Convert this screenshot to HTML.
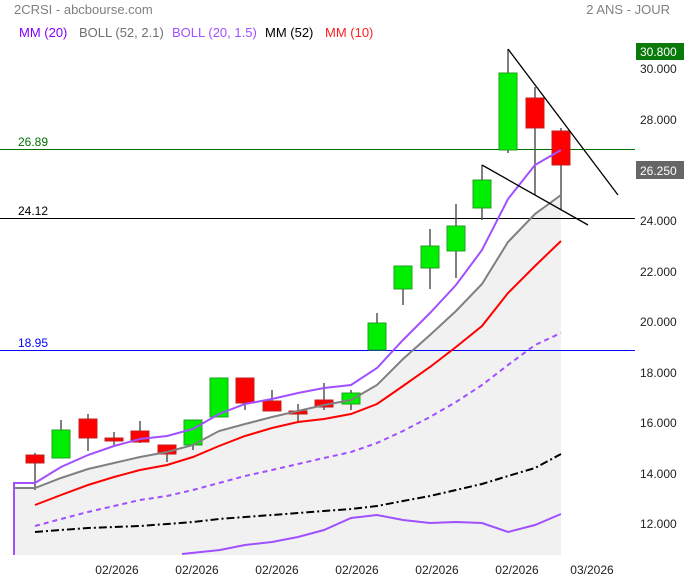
<!DOCTYPE html>
<html><head><meta charset="utf-8"><style>
body{margin:0;background:#fff;width:684px;height:580px;overflow:hidden;font-family:"Liberation Sans",sans-serif}
</style></head><body>
<svg width="684" height="580" xmlns="http://www.w3.org/2000/svg" font-family="Liberation Sans, sans-serif">
<text x="14" y="14" font-size="13" fill="#808080">2CRSI - abcbourse.com</text>
<text x="670" y="14" font-size="13" fill="#808080" text-anchor="end">2 ANS - JOUR</text>
<g font-size="13">
<text x="19" y="37" fill="#8000ff">MM (20)</text>
<text x="79" y="37" fill="#707070">BOLL (52, 2.1)</text>
<text x="172" y="37" fill="#a050ff">BOLL (20, 1.5)</text>
<text x="265" y="37" fill="#000">MM (52)</text>
<text x="325" y="37" fill="#ff2020">MM (10)</text>
</g>
<!-- fill -->
<polygon fill="#f1f1f1" points="14,488 35,488 61,478 88,469 114,463 140,457 167,452 193,445 219,431 245,424 272,417 298,411 324,405 351,400 377,385 403,359 430,335 456,311 482,284 508,242 535,214 561,195 561,555 14,555"/>
<!-- hlines -->
<line x1="0" y1="149.5" x2="635" y2="149.5" stroke="#007000"/>
<line x1="0" y1="218.5" x2="635" y2="218.5" stroke="#000"/>
<line x1="0" y1="350.5" x2="635" y2="350.5" stroke="#0000ff"/>
<text x="18" y="146" font-size="12" fill="#007000">26.89</text>
<text x="18" y="215" font-size="12" fill="#000">24.12</text>
<text x="18" y="347" font-size="12" fill="#0000ff">18.95</text>
<!-- candles -->
<g stroke="#555" stroke-width="1.5">
<line x1="35" y1="453" x2="35" y2="490"/><line x1="61" y1="420" x2="61" y2="458"/><line x1="88" y1="414" x2="88" y2="451"/><line x1="114" y1="432" x2="114" y2="445"/><line x1="140" y1="421" x2="140" y2="443"/><line x1="167" y1="445" x2="167" y2="462"/><line x1="193" y1="420" x2="193" y2="450"/><line x1="219" y1="378" x2="219" y2="417"/><line x1="245" y1="378" x2="245" y2="410"/><line x1="272" y1="390" x2="272" y2="411"/><line x1="298" y1="404" x2="298" y2="422"/><line x1="324" y1="383" x2="324" y2="410"/><line x1="351" y1="390" x2="351" y2="410"/><line x1="377" y1="313" x2="377" y2="350"/><line x1="403" y1="266" x2="403" y2="305"/><line x1="430" y1="229" x2="430" y2="289"/><line x1="456" y1="204" x2="456" y2="278"/><line x1="482" y1="165" x2="482" y2="220"/><line x1="508" y1="49" x2="508" y2="153"/><line x1="535" y1="87" x2="535" y2="195"/><line x1="561" y1="128" x2="561" y2="210"/>
</g>
<g stroke-width="1">
<g fill="#ff0000" stroke="#c02020">
<rect x="26" y="455" width="18" height="8"/><rect x="79" y="419" width="18" height="19"/><rect x="105" y="438" width="18" height="3"/><rect x="131" y="431" width="18" height="11"/><rect x="158" y="445" width="18" height="9"/><rect x="236" y="378" width="18" height="25"/><rect x="263" y="401" width="18" height="10"/><rect x="289" y="411" width="18" height="3"/><rect x="315" y="400" width="18" height="7"/><rect x="526" y="98" width="18" height="30"/><rect x="552" y="131" width="18" height="34"/>
</g>
<g fill="#00ee00" stroke="#20a020">
<rect x="52" y="430" width="18" height="28"/><rect x="184" y="420" width="18" height="25"/><rect x="210" y="378" width="18" height="39"/><rect x="342" y="393" width="18" height="11"/><rect x="368" y="323" width="18" height="27"/><rect x="394" y="266" width="18" height="23"/><rect x="421" y="246" width="18" height="22"/><rect x="447" y="226" width="18" height="25"/><rect x="473" y="180" width="18" height="28"/><rect x="499" y="73" width="18" height="77"/>
</g></g>
<g fill="none" stroke-width="2">
<polyline stroke="#000" stroke-dasharray="8,3,2,3" points="35,532 61,530 88,528 114,527 140,526 167,524 193,522 219,519 245,517 272,515 298,513 324,511 351,509 377,506 403,501 430,496 456,490 482,484 508,476 535,468 561,454"/>
<polyline stroke="#a050ff" stroke-dasharray="5,4" points="35,526 61,519 88,512 114,506 140,500 167,496 193,490 219,483 245,476 272,470 298,464 324,458 351,452 377,443 403,431 430,417 456,402 482,385 508,365 535,345 561,333"/>
<polyline stroke="#a050ff" points="182,554 220,550 245,545 272,542 298,537 324,530 351,518 377,515 403,520 430,523 456,522 482,523 508,532 535,525 561,514"/>
<polyline stroke="#ff0000" points="35,505 61,495 88,485 114,477 140,470 167,465 193,457 219,446 245,436 272,428 298,422 324,419 351,414 377,404 403,386 430,367 456,347 482,326 508,293 535,266 561,241"/>
<polyline stroke="#808080" points="14,488 35,488 61,478 88,469 114,463 140,457 167,452 193,445 219,431 245,424 272,417 298,411 324,405 351,400 377,385 403,359 430,335 456,311 482,284 508,242 535,214 561,195"/>
<polyline stroke="#a050ff" points="14,555 14,483 35,483 61,467 88,455 114,446 140,439 167,436 193,429 219,414 245,404 272,399 298,393 324,388 351,385 377,368 403,340 430,313 456,285 482,250 508,199 535,165 561,150"/>
</g>
<line x1="482" y1="165" x2="588" y2="225" stroke="#000" stroke-width="1.3"/>
<line x1="508" y1="49" x2="618" y2="195" stroke="#000" stroke-width="1.3"/>
<g font-size="12" fill="#222">
<text x="640" y="73">30.000</text><text x="640" y="124">28.000</text><text x="640" y="225">24.000</text><text x="640" y="276">22.000</text><text x="640" y="326">20.000</text><text x="640" y="377">18.000</text><text x="640" y="427">16.000</text><text x="640" y="478">14.000</text><text x="640" y="528">12.000</text>
</g>
<rect x="636" y="43" width="48" height="17" fill="#0a7a0a"/>
<text x="640" y="56" font-size="12" fill="#fff">30.800</text>
<rect x="636" y="161" width="48" height="18" fill="#666"/>
<text x="640" y="175" font-size="12" fill="#fff">26.250</text>
<g font-size="12" fill="#222" text-anchor="middle">
<text x="117" y="574">02/2026</text><text x="197" y="574">02/2026</text><text x="277" y="574">02/2026</text><text x="357" y="574">02/2026</text><text x="437" y="574">02/2026</text><text x="517" y="574">02/2026</text><text x="592" y="574">03/2026</text>
</g>
</svg>
</body></html>
